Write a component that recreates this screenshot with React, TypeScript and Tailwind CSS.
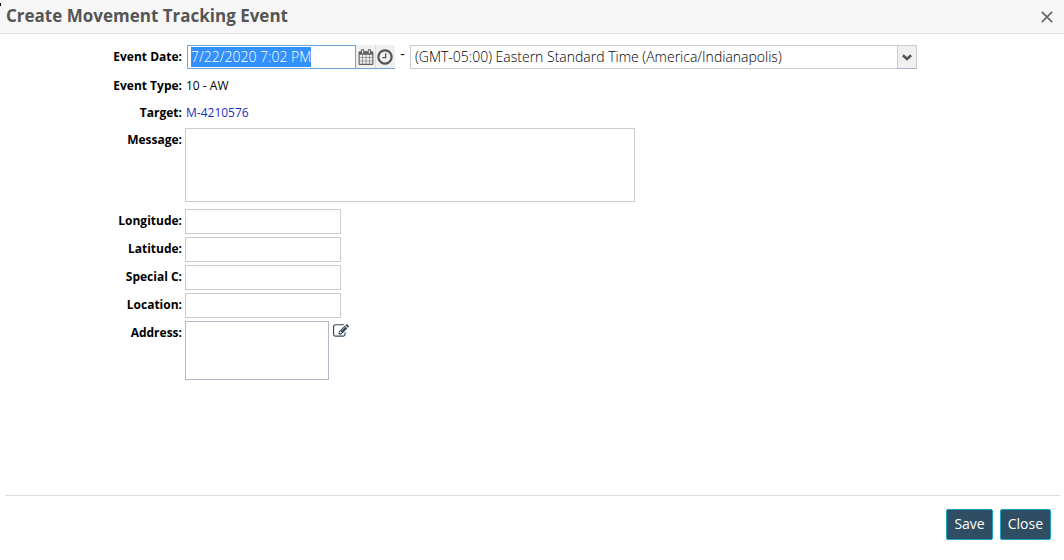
import { useEffect, useRef, type ReactNode } from "react";

const CALENDAR =
  "M192 1664h288v-288h-288v288zm352 0h320v-288h-320v288zm-352-352h288v-320h-288v320zm352 0h320v-320h-320v320zm-352-384h288v-288h-288v288zm736 736h320v-288h-320v288zm-384-736h320v-288h-320v288zm768 736h288v-288h-288v288zm-384-352h320v-320h-320v320zm-352-864v-288q0-13-9.5-22.5t-22.5-9.5h-64q-13 0-22.5 9.5t-9.5 22.5v288q0 13 9.5 22.5t22.5 9.5h64q13 0 22.5-9.5t9.5-22.5zm736 864h288v-320h-288v320zm-384-384h320v-288h-320v288zm384 0h288v-288h-288v288zm32-480v-288q0-13-9.5-22.5t-22.5-9.5h-64q-13 0-22.5 9.5t-9.5 22.5v288q0 13 9.5 22.5t22.5 9.5h64q13 0 22.5-9.5t9.5-22.5zm384-64v1280q0 52-38 90t-90 38h-1408q-52 0-90-38t-38-90v-1280q0-52 38-90t90-38h128v-96q0-66 47-113t113-47h64q66 0 113 47t47 113v96h384v-96q0-66 47-113t113-47h64q66 0 113 47t47 113v96h128q52 0 90 38t38 90z";
const CLOCK =
  "M1024 544v448q0 14-9 23t-23 9h-320q-14 0-23-9t-9-23v-64q0-14 9-23t23-9h224v-352q0-14 9-23t23-9h64q14 0 23 9t9 23zm416 352q0-148-73-273t-198-198-273-73-273 73-198 198-73 273 73 273 198 198 273 73 273-73 198-198 73-273zm224 0q0 209-103 385.5t-279.5 279.5-385.5 103-385.5-103-279.5-279.5-103-385.5 103-385.5 279.5-279.5 385.5-103 385.5 103 279.5 279.5 103 385.5z";
const EDIT =
  "M888 1184l116-116-152-152-116 116v56h96v96h56zm440-720q-16-16-33 1l-350 350q-17 17-1 33t33-1l350-350q17-17 1-33zm80 594v190q0 119-84.5 203.5t-203.5 84.5h-832q-119 0-203.5-84.5t-84.5-203.5v-832q0-119 84.5-203.5t203.5-84.5h832q63 0 117 25 15 7 18 23 3 17-9 29l-49 49q-14 14-32 8-23-6-45-6h-832q-66 0-113 47t-47 113v832q0 66 47 113t113 47h832q66 0 113-47t47-113v-126q0-13 9-22l64-64q15-15 35-7t20 29zm-96-738l288 288-672 672h-288v-288zm444 132l-92 92-288-288 92-92q28-28 68-28t68 28l152 152q28 28 28 68t-28 68z";

function Icon({ path, className }: { path: string; className: string }) {
  return (
    <svg viewBox="0 0 1792 1792" fill="currentColor" className={className} aria-hidden="true">
      <path d={path} />
    </svg>
  );
}

function Row({ label, htmlFor, children }: { label: string; htmlFor?: string; children: ReactNode }) {
  const style = "w-[182px] shrink-0 pt-1 text-right text-xs font-bold text-black";
  return (
    <div className="flex items-start gap-[3px]">
      {htmlFor ? (
        <label htmlFor={htmlFor} className={style}>{label}</label>
      ) : (
        <span className={style}>{label}</span>
      )}
      {children}
    </div>
  );
}

const SHORT_FIELDS = [
  { id: "longitude", label: "Longitude:" },
  { id: "latitude", label: "Latitude:" },
  { id: "special", label: "Special C:" },
  { id: "location", label: "Location:" },
];

export default function App() {
  const dateRef = useRef<HTMLInputElement>(null);

  useEffect(() => {
    dateRef.current?.focus();
    dateRef.current?.select();
  }, []);

  return (
    <div className="relative flex min-h-screen flex-col bg-white font-['Open_Sans',sans-serif] text-black">
      <span className="absolute left-0 top-[3px] h-[3px] w-px bg-black" aria-hidden="true" />
      <header className="flex h-[34px] items-center justify-between border-b border-[#dedede] bg-[#f7f7f7] pl-1.5 pr-[11px]">
        <h1 className="pb-0.5 text-[17px] leading-6 font-bold text-[#555]">Create Movement Tracking Event</h1>
        <button type="button" aria-label="Close dialog" className="text-[#666]">
          <svg viewBox="0 0 12 12" className="size-3" fill="none" stroke="currentColor" strokeWidth="1.700" aria-hidden="true">
            <path d="M.8.8l10.4 10.4M11.2.8L.8 11.2" />
          </svg>
        </button>
      </header>

      <form className="flex grow flex-col" onSubmit={(e) => e.preventDefault()}>
        <div className="flex grow flex-col gap-[3px] pt-[11px]">
          <Row label="Event Date:" htmlFor="event-date">
            <div className="flex items-start pl-0.5">
              <div className="flex h-6 border-b border-[#6ea3d4] bg-[#f0f0f0]">
                <input
                  id="event-date"
                  ref={dateRef}
                  defaultValue="7/22/2020 7:02 PM"
                  className="-mb-px w-[169px] border border-[#6ea3d4] bg-white px-[3px] text-sm font-[350] outline-none selection:bg-[#3390ff] selection:text-white"
                />
                <button type="button" aria-label="Pick date" className="flex w-[19px] items-center justify-center text-[#606060]">
                  <Icon path={CALENDAR} className="size-4" />
                </button>
                <button type="button" aria-label="Pick time" className="flex w-5 items-center justify-center border-l border-[#dedede] pr-0.5 text-[#555]">
                  <Icon path={CLOCK} className="size-[18px] shrink-0" />
                </button>
              </div>
              <span className="w-[15px] text-center text-sm leading-[18px]">-</span>
              <div className="relative flex">
                <select
                  aria-label="Time zone"
                  className="h-6 w-[507px] appearance-none border border-[#ccc] bg-white pl-1 pr-6 text-sm leading-5 font-[350] outline-none"
                >
                  <option>(GMT-05:00) Eastern Standard Time (America/Indianapolis)</option>
                </select>
                <span className="pointer-events-none absolute inset-y-0 right-0 flex w-5 items-center justify-center border border-[#ccc] border-b-[#a9b4d4] bg-[#f0f0f0] text-[#555]">
                  <svg viewBox="0 0 10 7" className="h-[7px] w-2.5" fill="none" stroke="currentColor" strokeWidth="2.6" aria-hidden="true">
                    <path d="M.9 1.2L5 5l4.1-3.800" />
                  </svg>
                </span>
              </div>
            </div>
          </Row>
          <div className="flex flex-col gap-[3px] pt-0.5">
            <Row label="Event Type:">
              <span className="pt-1 pl-px pb-1 text-xs">10 - AW</span>
            </Row>
            <Row label="Target:">
              <a href="#target" className="pt-1 pl-px pb-1 text-xs text-[#1a2fc0]">M-4210576</a>
            </Row>
          </div>
          <Row label="Message:" htmlFor="message">
            <textarea id="message" className="mb-1 h-[74px] w-[450px] resize-none border border-[#ccc] px-1 text-sm outline-none" />
          </Row>
          {SHORT_FIELDS.map((f) => (
            <Row key={f.id} label={f.label} htmlFor={f.id}>
              <input id={f.id} className="h-[25px] w-[156px] border border-[#ccc] px-1 text-sm outline-none" />
            </Row>
          ))}
          <Row label="Address:" htmlFor="address">
            <textarea id="address" className="h-[59px] w-36 resize-none border border-[#b5b5c8] px-1 text-sm outline-none" />
            <button type="button" aria-label="Edit address" className="pt-0.5 pl-px text-[#2e4a5f]">
              <Icon path={EDIT} className="size-4" />
            </button>
          </Row>
        </div>

        <footer className="mr-1 ml-[5px] flex justify-end gap-[7px] border-t border-[#dedede] pt-[13px] pr-[9px] pb-5">
          <button type="submit" className="h-[31px] rounded-[2px] border border-[#1ba5bf] bg-[#2f4d63] px-[7px] pb-0.5 text-sm text-white">Save</button>
          <button type="button" className="h-[31px] rounded-[2px] border border-[#1ba5bf] bg-[#2f4d63] px-[7px] pb-0.5 text-sm text-white">Close</button>
        </footer>
      </form>
    </div>
  );
}
